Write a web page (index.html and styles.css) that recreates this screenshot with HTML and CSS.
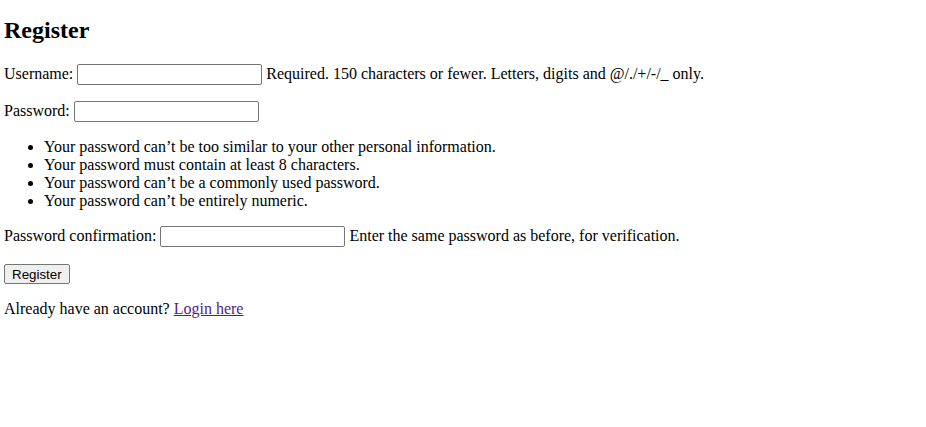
FILE: index.html
```html
<!DOCTYPE html>
<html>
<head>
<meta charset="utf-8">
<title>Register</title>
<link rel="stylesheet" href="styles.css">
</head>
<body class="page">
<h2 class="title">Register</h2>
<form class="form" method="post">
  <p class="row"><label class="label" for="id_username">Username:</label> <input class="field" type="text" id="id_username"> <span class="help">Required. 150 characters or fewer. Letters, digits and @/./+/-/_ only.</span></p>
  <p class="row"><label class="label" for="id_password1">Password:</label> <input class="field" type="password" id="id_password1"></p>
  <ul class="rules">
    <li>Your password can’t be too similar to your other personal information.</li>
    <li>Your password must contain at least 8 characters.</li>
    <li>Your password can’t be a commonly used password.</li>
    <li>Your password can’t be entirely numeric.</li>
  </ul>
  <p class="row"><label class="label" for="id_password2">Password confirmation:</label> <input class="field" type="password" id="id_password2"> <span class="help">Enter the same password as before, for verification.</span></p>
  <div class="actions"><button class="btn" type="submit">Register</button></div>
</form>
<p class="row">Already have an account? <a class="link" href="#">Login here</a></p>
</body>
</html>
```
FILE: styles.css
```css
html { background: #fff; }
.page {
  margin: 4px;
  font-family: "Liberation Serif", "Times New Roman", serif;
  font-size: 16px;
  color: #000;
}
.title {
  font-size: 24px;
  font-weight: bold;
  margin: 13px 0 20px;
}
.row { margin: 16px 0; }
.field {
  box-sizing: border-box;
  width: 185px;
  height: 21px;
  border: 1px solid #767676;
  border-radius: 2px;
  padding: 1px 2px;
  font-family: "Liberation Sans", Arial, sans-serif;
  font-size: 13.33px;
  vertical-align: baseline;
}
.rules {
  margin: 16px 0;
  padding-left: 40px;
}
.actions { padding-top: 1px; }
.btn {
  box-sizing: border-box;
  height: 20px;
  font-family: "Liberation Sans", Arial, sans-serif;
  font-size: 13.33px;
  padding: 1px 7px;
  border: 1px solid #767676;
  border-radius: 2px;
  background: #efefef;
  color: #000;
}
.link { color: #551a8b; }
```
